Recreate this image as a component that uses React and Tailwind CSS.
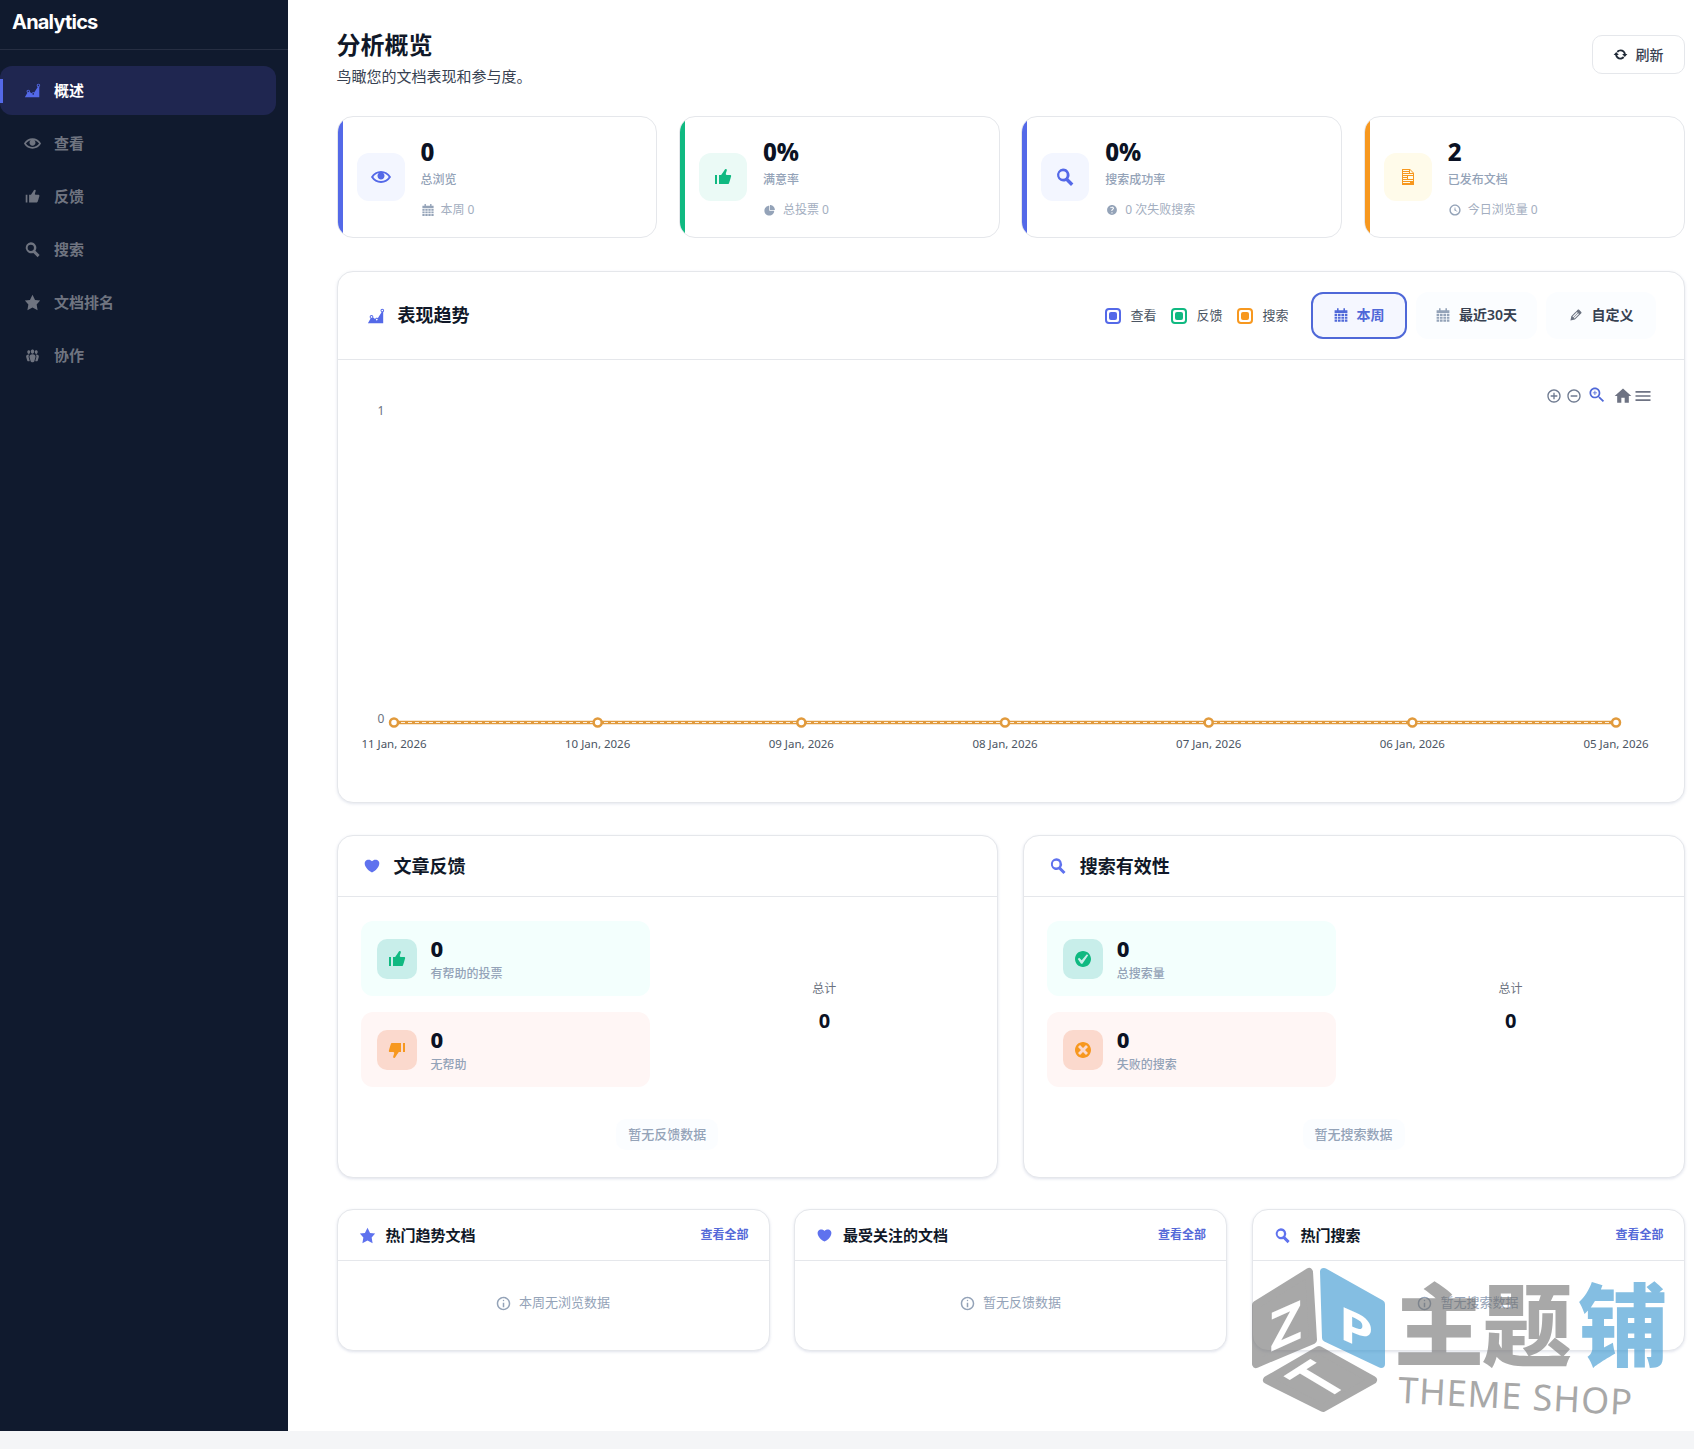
import React from 'react';

const paths = {
  chart: "M18 18l.01-12.28c.59-.35.99-.99.99-1.72 0-1.1-.9-2-2-2s-2 .9-2 2c0 .8.47 1.48 1.14 1.8l-4.13 6.58c-.33-.24-.73-.38-1.16-.38-.84 0-1.55.51-1.85 1.24l-2.14-1.53c.09-.22.14-.46.14-.71 0-1.11-.89-2-2-2-1.1 0-2 .89-2 2 0 .73.4 1.36.98 1.71L1 18h17zM17 3c.55 0 1 .45 1 1s-.45 1-1 1-1-.45-1-1 .45-1 1-1zM5 10c.55 0 1 .45 1 1s-.45 1-1 1-1-.45-1-1 .45-1 1-1zm5.85 3c.55 0 1 .45 1 1s-.45 1-1 1-1-.45-1-1 .45-1 1-1z",
  eye: "M19.7 9.4C17.7 6 14 3.9 10 3.9S2.3 6 .3 9.4L0 10l.3.6c2 3.4 5.7 5.5 9.7 5.5s7.7-2.1 9.7-5.5l.3-.6-.3-.6zM10 14.1c-3.1 0-6-1.6-7.7-4.1C3.6 8 5.7 6.6 8 6.1c-.9.6-1.5 1.7-1.5 2.9 0 1.9 1.6 3.5 3.5 3.5s3.5-1.6 3.5-3.5c0-1.2-.6-2.3-1.5-2.9 2.3.5 4.4 1.9 5.7 3.9-1.7 2.5-4.6 4.1-7.7 4.1z",
  up: "M12.72 2c.15-.02.26.02.41.07.56.19.83.79.66 1.35-.17.55-1 3.04-1 3.58 0 .53.75 1 1.35 1h3c.6 0 1 .4 1 1s-2 7-2 7c-.17.39-.55 1-1 1H6V8h2.14c.41-.41 3.3-4.71 3.58-5.27.21-.41.6-.68 1-.73zM2 8h2v9H2V8z",
  down: "M7.28 18c-.15.02-.26-.02-.41-.07-.56-.19-.83-.79-.66-1.35.17-.55 1-3.04 1-3.58 0-.53-.75-1-1.35-1h-3c-.6 0-1-.4-1-1s2-7 2-7c.17-.39.55-1 1-1H14v9h-2.14c-.41.41-3.3 4.71-3.58 5.27-.21.41-.6.68-1 .73zM18 12h-2V3h2v9z",
  search: "M8 1.500a6.500 6.500 0 0 1 5.400 10.100l5 5-2.400 2.400-5-5A6.500 6.500 0 1 1 8 1.500zm0 2.800a3.700 3.700 0 1 0 0 7.400 3.700 3.700 0 0 0 0-7.400z",
  star: "m10 1 3 6 6 .75-4.12 4.62L16 19l-6-3-6 3 1.13-6.63L1 7.75 7 7z",
  groups: "M8.03 4.46c-.29 1.28.55 3.46 1.97 3.46 1.41 0 2.25-2.18 1.96-3.46-.22-.98-1.08-1.63-1.96-1.63-.89 0-1.74.65-1.97 1.63zm-4.13.9c-.25 1.08.47 2.93 1.67 2.93s1.92-1.85 1.67-2.93c-.19-.83-.92-1.39-1.67-1.39s-1.48.56-1.67 1.39zm8.86 0c-.25 1.08.47 2.93 1.66 2.93 1.2 0 1.92-1.85 1.67-2.93-.19-.83-.92-1.39-1.67-1.39-.74 0-1.47.56-1.66 1.39zm-.59 11.43l1.25-4.3C14.2 10 12.71 8.47 10 8.47c-2.72 0-4.21 1.53-3.44 4.02l1.26 4.3C8.05 17.51 9 18 10 18c.98 0 1.94-.49 2.17-1.21zm-6.1-7.63c-.49.67-.96 1.83-.42 3.59l1.12 3.79c-.34.2-.77.31-1.2.31-.85 0-1.65-.41-1.85-1.03l-1.07-3.65c-.65-2.11.61-3.4 2.92-3.4.27 0 .54.02.79.06-.1.1-.2.22-.29.33zm8.35-.39c2.31 0 3.58 1.29 2.92 3.4l-1.07 3.65c-.2.62-1 1.03-1.85 1.03-.43 0-.86-.11-1.2-.31l1.11-3.77c.55-1.78.08-2.94-.42-3.61-.08-.11-.18-.23-.28-.33.25-.04.51-.06.79-.06z",
  heart: "M10 17.12c3.33-1.4 5.74-3.79 7.04-6.21 1.28-2.41 1.46-4.81.32-6.25-1.03-1.29-2.37-1.78-3.73-1.74s-2.68.63-3.63 1.74c-.95-1.11-2.27-1.7-3.63-1.74s-2.7.45-3.73 1.74c-1.14 1.44-.96 3.84.34 6.25 1.28 2.42 3.69 4.81 7.02 6.21z",
  calendar: "M5 1.500h2V4h6V1.500h2V4h3v3.500H2V4h3zM2 8.500h3.200v2.600H2zm4.200 0h3.300v2.600H6.200zm4.300 0h3.300v2.600h-3.300zm4.300 0H18v2.600h-3.200zM2 12.100h3.200v2.600H2zm4.200 0h3.300v2.600H6.200zm4.300 0h3.300v2.600h-3.300zm4.300 0H18v2.600h-3.200zM2 15.700h3.200v2.800H2zm4.200 0h3.300v2.800H6.200zm4.300 0h3.300v2.800h-3.300zm4.300 0H18v2.800h-3.200z",
  pie: "M10 10V3c3.870 0 7 3.130 7 7h-7zM9 4v7h7c0 3.870-3.130 7-7 7s-7-3.130-7-7 3.130-7 7-7z",
  help: "M17 10c0-3.870-3.140-7-7-7-3.870 0-7 3.130-7 7s3.130 7 7 7c3.860 0 7-3.130 7-7zm-6.300 1.290h-1.660v-.45c0-.38.08-.71.24-.99.16-.28.45-.59.87-.91.4-.29.66-.51.79-.69.14-.18.2-.38.2-.6 0-.25-.09-.44-.28-.58-.19-.13-.45-.19-.79-.19-.58 0-1.250.19-2 .57l-.69-1.390c.87-.49 1.800-.74 2.770-.74.81 0 1.450.2 1.920.58.48.39.71.91.71 1.550 0 .43-.09.8-.29 1.110-.19.32-.57.67-1.110 1.060-.38.28-.61.49-.71.63-.1.15-.15.34-.15.57v.47zm-.7 3.710c-.3 0-.53-.08-.69-.24-.17-.16-.25-.38-.25-.67 0-.29.08-.52.25-.68s.4-.24.69-.24.52.08.68.24.24.39.24.68c0 .28-.08.5-.24.67-.16.16-.39.24-.68.24z",
  clock: "M10 2c4.420 0 8 3.580 8 8s-3.580 8-8 8-8-3.580-8-8 3.580-8 8-8zm0 14c3.310 0 6-2.690 6-6s-2.690-6-6-6-6 2.690-6 6 2.690 6 6 6zm-.71-5.290c.07.05.14.1.23.15l-.02.02L14 13l-3.030-3.190L10 5l-.97 4.810h.01c0 .02-.01.05-.02.09S9 9.970 9 10c0 .28.1.52.29.71z",
  doc: "M12 2l4 4v12H4V2h8zM5 3v1h6V3H5zm7 3h3l-3-3v3zM5 5v1h6V5H5zm10 3V7H5v1h10zM5 9v1h4V9H5zm10 3V9h-5v3h5zM5 11v1h4v-1H5zm10 3v-1H5v1h10zm-3 2v-1H5v1h7z",
  edit: "M13.890 3.390l2.710 2.720c.46.46.42 1.240.03 1.640l-8.010 8.020-5.560 1.160 1.160-5.580s7.600-7.630 7.990-8.030c.39-.39 1.220-.39 1.680.07zm-2.730 2.790l-5.590 5.610 1.110 1.110 5.540-5.650zm-2.970 8.230l5.580-5.600-1.070-1.080-5.590 5.600z",
  update: "M10.200 3.280c3.530 0 6.430 2.610 6.920 6h2.080l-3.500 4-3.500-4h2.320c-.45-1.970-2.210-3.450-4.320-3.450-1.450 0-2.730.71-3.540 1.780L4.950 5.660C6.230 4.200 8.110 3.280 10.200 3.280zm-.4 13.440c-3.520 0-6.430-2.610-6.920-6H.8l3.500-4c1.170 1.330 2.330 2.670 3.500 4H5.480c.45 1.970 2.210 3.450 4.320 3.450 1.450 0 2.730-.71 3.540-1.780l1.710 1.950c-1.280 1.460-3.150 2.380-5.250 2.380z",
  yes: "M10 2c-4.420 0-8 3.580-8 8s3.580 8 8 8 8-3.580 8-8-3.580-8-8-8zm-.615 12.660h-1.340l-3.240-4.540 1.340-1.250 2.570 2.400 5.140-5.930 1.340.94-5.810 8.380z",
  dismiss: "M10 2c4.420 0 8 3.580 8 8s-3.580 8-8 8-8-3.580-8-8 3.580-8 8-8zm5 11l-3-3 3-3-2-2-3 3-3-3-2 2 3 3-3 3 2 2 3-3 3 3z",
  info: "M9 15h2V9H9v6zm1-10c-.5 0-1 .5-1 1s.5 1 1 1 1-.5 1-1-.5-1-1-1zm0-4c-5 0-9 4-9 9s4 9 9 9 9-4 9-9-4-9-9-9zm0 16c-3.900 0-7-3.100-7-7s3.100-7 7-7 7 3.100 7 7-3.100 7-7 7z",
};

const Icon = ({ name, className }) => (
  <svg viewBox="0 0 20 20" fill="currentColor" className={className}>
    <path d={paths[name]} />
  </svg>
);

const navItems = [
  { label: '概述', icon: 'chart', active: true },
  { label: '查看', icon: 'eye' },
  { label: '反馈', icon: 'up' },
  { label: '搜索', icon: 'search' },
  { label: '文档排名', icon: 'star' },
  { label: '协作', icon: 'groups' },
];

const stats = [
  { value: '0', label: '总浏览', meta: '本周 0', icon: 'eye', metaIcon: 'calendar', edge: 'bg-[#5469e8]', box: 'bg-[#f3f6ff]', tint: 'text-[#5469e8]' },
  { value: '0%', label: '满意率', meta: '总投票 0', icon: 'up', metaIcon: 'pie', edge: 'bg-[#10b981]', box: 'bg-[#ebfaf6]', tint: 'text-[#10b981]' },
  { value: '0%', label: '搜索成功率', meta: '0 次失败搜索', icon: 'search', metaIcon: 'help', edge: 'bg-[#5469e8]', box: 'bg-[#f3f6ff]', tint: 'text-[#5469e8]' },
  { value: '2', label: '已发布文档', meta: '今日浏览量 0', icon: 'doc', metaIcon: 'clock', edge: 'bg-[#f7981f]', box: 'bg-[#fffbea]', tint: 'text-[#f7981f]' },
];

const legend = [
  { label: '查看', border: 'border-[#5469e8]', fill: 'bg-[#5469e8]' },
  { label: '反馈', border: 'border-[#10b981]', fill: 'bg-[#10b981]' },
  { label: '搜索', border: 'border-[#f7981f]', fill: 'bg-[#f7981f]' },
];

const dates = ['11 Jan, 2026', '10 Jan, 2026', '09 Jan, 2026', '08 Jan, 2026', '07 Jan, 2026', '06 Jan, 2026', '05 Jan, 2026'];

const panels = [
  {
    title: '文章反馈', icon: 'heart', empty: '暂无反馈数据',
    rows: [
      { value: '0', label: '有帮助的投票', icon: 'up', row: 'bg-[#f3fffd]', box: 'bg-[#c8eeea]', tint: 'text-[#10b981]' },
      { value: '0', label: '无帮助', icon: 'down', row: 'bg-[#fff6f5]', box: 'bg-[#fbd9cd]', tint: 'text-[#f7981f]' },
    ],
  },
  {
    title: '搜索有效性', icon: 'search', empty: '暂无搜索数据',
    rows: [
      { value: '0', label: '总搜索量', icon: 'yes', row: 'bg-[#f3fffd]', box: 'bg-[#c8eeea]', tint: 'text-[#10b981]' },
      { value: '0', label: '失败的搜索', icon: 'dismiss', row: 'bg-[#fff6f5]', box: 'bg-[#fbd9cd]', tint: 'text-[#f7981f]' },
    ],
  },
];

const lists = [
  { title: '热门趋势文档', icon: 'star', empty: '本周无浏览数据' },
  { title: '最受关注的文档', icon: 'heart', empty: '暂无反馈数据' },
  { title: '热门搜索', icon: 'search', empty: '暂无搜索数据' },
];

const Chart = () => {
  const xs = dates.map((_, i) => 394 + i * 203.67);
  return (
    <svg viewBox="338 360 1346 442" className="block w-full h-[442px]">
      <text x="381" y="415" textAnchor="middle" fontSize="12" fill="#6b7280">1</text>
      <text x="381" y="723" textAnchor="middle" fontSize="12" fill="#6b7280">0</text>
      <line x1="394" y1="722.500" x2="1616" y2="722.500" stroke="#e19a3c" strokeWidth="3.500" />
      <line x1="394" y1="722.500" x2="1616" y2="722.500" stroke="#fbeedd" strokeWidth="1" strokeDasharray="4 3" />
      {xs.map((x, i) => (
        <g key={dates[i]}>
          <circle cx={x} cy="722.500" r="4" fill="#fff" stroke="#e19a3c" strokeWidth="2.500" />
          <text x={x} y="748" textAnchor="middle" fontSize="11.500" fill="#4b5563">{dates[i]}</text>
        </g>
      ))}
      <svg x="1546" y="388" width="16" height="16" viewBox="0 0 24 24" fill="#6e7a90">
        <path d="M13 7h-2v4H7v2h4v4h2v-4h4v-2h-4V7zm-1-5C6.480 2 2 6.480 2 12s4.480 10 10 10 10-4.480 10-10S17.520 2 12 2zm0 18c-4.410 0-8-3.590-8-8s3.590-8 8-8 8 3.590 8 8-3.590 8-8 8z" />
      </svg>
      <svg x="1566" y="388" width="16" height="16" viewBox="0 0 24 24" fill="#6e7a90">
        <path d="M7 11v2h10v-2H7zm5-9C6.480 2 2 6.480 2 12s4.480 10 10 10 10-4.480 10-10S17.520 2 12 2zm0 18c-4.410 0-8-3.590-8-8s3.590-8 8-8 8 3.590 8 8-3.590 8-8 8z" />
      </svg>
      <svg x="1587" y="385" width="20" height="20" viewBox="0 0 24 24" fill="#4f68d8">
        <path d="M15.500 14h-.79l-.28-.27C15.410 12.590 16 11.110 16 9.500 16 5.910 13.090 3 9.500 3S3 5.910 3 9.500 5.910 16 9.500 16c1.610 0 3.090-.59 4.230-1.570l.27.28v.79l5 4.990L20.490 19l-4.990-5zm-6 0C7.010 14 5 11.990 5 9.500S7.010 5 9.500 5 14 7.010 14 9.500 11.990 14 9.500 14z" />
        <path d="M12 10h-2v2H9v-2H7V9h2V7h1v2h2v1z" />
      </svg>
      <svg x="1613" y="386" width="20" height="20" viewBox="0 0 24 24" fill="#6e7383">
        <path d="M10 20v-6h4v6h5v-8h3L12 3 2 12h3v8z" />
      </svg>
      <svg x="1633" y="386" width="20" height="20" viewBox="0 0 24 24" fill="#6e7383">
        <path d="M3 18h18v-2H3v2zm0-5h18v-2H3v2zm0-7v2h18V6H3z" />
      </svg>
    </svg>
  );
};

const Watermark = () => (
  <div className="absolute left-[1251px] top-[1264px] w-[430px] h-[156px] opacity-60 pointer-events-none">
    <svg viewBox="0 0 140 152" className="absolute left-0 top-0 w-[140px] h-[152px]">
      <g strokeLinejoin="round" strokeWidth="8">
        <polygon points="5,41 58,8 62,76 5,100" fill="#6f6f6f" stroke="#6f6f6f" />
        <polygon points="73,8 130,40 130,100 75,74" fill="#3494cf" stroke="#3494cf" />
        <polygon points="68,86 122,116 72,144 16,116" fill="#6f6f6f" stroke="#6f6f6f" />
      </g>
      <text transform="translate(19 88) skewY(-24) scale(1.150 1.120)" fontSize="48" fontWeight="700" fill="#fff">Z</text>
      <text transform="translate(88 74) skewY(24) scale(1.200 1)" fontSize="46" fontWeight="700" fill="#fff">P</text>
      <text transform="matrix(1 -.645 1.150 .685 87 128)" fontSize="50" fontWeight="600" textAnchor="middle" fill="#fff">T</text>
    </svg>
    <div className="absolute left-[143px] top-[6px] flex items-center whitespace-nowrap text-[90px] leading-[108px] font-black tracking-[-2px]">
      <span className="text-[#6f6f6f]">主题</span>
      <span className="ml-[8px] text-[#3494cf]">铺</span>
    </div>
    <div className="absolute left-[147px] top-[111px] text-[36px] leading-[42px] font-normal tracking-[1px] text-[#6f6f6f] rotate-[3deg] whitespace-nowrap">THEME SHOP</div>
  </div>
);

export default function App() {
  return (
    <div className="relative min-h-[1449px] bg-[#f4f5f7] font-['Noto_Sans','Noto_Sans_CJK_SC',sans-serif]">
      <div className="flex h-[1431px] bg-white">
        {/* Sidebar */}
        <aside className="w-[288px] shrink-0 bg-[#101a2e]">
          <div className="h-[50px] pl-[12px] pt-[8px] border-b border-[#262e42] font-['Inter',sans-serif] text-[20px] leading-[28px] font-bold tracking-[-0.8px] text-white">Analytics</div>
          <nav className="flex flex-col gap-[4px] pt-[16px] pr-[12px]">
            {navItems.map((item) => (
              <div
                key={item.label}
                className={`relative flex items-center h-[49px] pl-[24px] gap-[13px] rounded-[12px] text-[15px] font-semibold ${
                  item.active ? 'bg-[#1f2650] text-white' : 'text-[#6f7480]'
                }`}
              >
                {item.active && <span className="absolute left-0 top-[13px] w-[3px] h-[24px] bg-[#5469e8]" />}
                <Icon name={item.icon} className={`w-[17px] h-[17px] ${item.active ? 'text-[#5469e8]' : ''}`} />
                <span>{item.label}</span>
              </div>
            ))}
          </nav>
        </aside>

        {/* Main */}
        <main className="flex-1 min-w-0 pl-[48.500px] pr-[9.500px] pt-[29px]">
          <div className="flex items-start justify-between">
            <div>
              <h1 className="text-[24px] leading-[32px] font-bold text-[#101828]">分析概览</h1>
              <p className="mt-[5px] text-[15px] leading-[20px] text-[#374151]">鸟瞰您的文档表现和参与度。</p>
            </div>
            <button className="mt-[6px] flex items-center justify-center gap-[8px] w-[93px] h-[39px] rounded-[10px] border border-[#e5e7eb] bg-white text-[14px] font-medium text-[#374151]">
              <Icon name="update" className="w-[15px] h-[15px] text-[#1f2937]" />
              刷新
            </button>
          </div>

          <div className="mt-[30px] grid grid-cols-4 gap-[21.500px]">
            {stats.map((s) => (
              <div key={s.label} className="relative overflow-hidden flex items-center h-[122px] pl-[19px] rounded-[16px] border border-[#e5e7eb] bg-white">
                <span className={`absolute left-0 top-0 bottom-0 w-[5px] ${s.edge}`} />
                <div className={`flex items-center justify-center w-[48px] h-[48px] rounded-[12px] ${s.box}`}>
                  <Icon name={s.icon} className={`w-[20px] h-[20px] ${s.tint}`} />
                </div>
                <div className="ml-[16px]">
                  <div className="text-[24px] leading-[30px] font-extrabold text-[#0b1224]">{s.value}</div>
                  <div className="mt-[5px] text-[12px] leading-[16px] font-medium text-[#94a3b8]">{s.label}</div>
                  <div className="mt-[14px] flex items-center gap-[6px] text-[12px] leading-[16px] text-[#a3aec0]">
                    <Icon name={s.metaIcon} className="w-[14px] h-[14px] text-[#94a3b8]" />
                    {s.meta}
                  </div>
                </div>
              </div>
            ))}
          </div>

          {/* Trend chart */}
          <section className="mt-[33px] rounded-[16px] border border-[#e5e7eb] bg-white shadow-[0_1px_3px_rgba(100,116,160,0.18)]">
            <div className="flex items-center h-[88px] pl-[29px] pr-[28px] border-b border-[#e5e7eb]">
              <Icon name="chart" className="w-[18px] h-[18px] text-[#5469e8]" />
              <h2 className="ml-[13px] text-[18px] font-bold text-[#101828]">表现趋势</h2>
              <div className="ml-auto flex items-center gap-[15px]">
                {legend.map((l) => (
                  <div key={l.label} className="flex items-center gap-[9px] text-[13px] text-[#4b5563]">
                    <span className={`w-[16px] h-[16px] p-[2px] rounded-[4px] border-2 bg-white ${l.border}`}>
                      <span className={`block w-full h-full rounded-[2px] ${l.fill}`} />
                    </span>
                    {l.label}
                  </div>
                ))}
              </div>
              <div className="ml-[22px] flex items-center gap-[9px] text-[14px]">
                <button className="flex items-center justify-center gap-[8px] w-[96px] h-[47px] pb-[2px] rounded-[12px] border-2 border-[#4f68d8] bg-[#f5f7ff] font-semibold text-[#4f68d8]">
                  <Icon name="calendar" className="w-[16px] h-[16px]" />
                  本周
                </button>
                <button className="flex items-center justify-center gap-[8px] w-[121px] h-[47px] pb-[2px] rounded-[12px] bg-[#fbfdff] font-semibold text-[#374151]">
                  <Icon name="calendar" className="w-[16px] h-[16px] text-[#94a3b8]" />
                  最近30天
                </button>
                <button className="flex items-center justify-center gap-[8px] w-[110px] h-[47px] pb-[2px] rounded-[12px] bg-[#fbfdff] font-semibold text-[#374151]">
                  <Icon name="edit" className="w-[16px] h-[16px] text-[#6b7280]" />
                  自定义
                </button>
              </div>
            </div>
            <Chart />
          </section>

          {/* Feedback and search */}
          <div className="mt-[32px] grid grid-cols-2 gap-[24.500px]">
            {panels.map((p) => (
              <section key={p.title} className="h-[343px] rounded-[16px] border border-[#e5e7eb] bg-white shadow-[0_1px_3px_rgba(100,116,160,0.2)]">
                <div className="flex items-center h-[61px] pl-[25px] border-b border-[#e5e7eb]">
                  <Icon name={p.icon} className="w-[18px] h-[18px] text-[#5f72ee]" />
                  <h2 className="ml-[13px] text-[18px] font-bold text-[#101828]">{p.title}</h2>
                </div>
                <div className="grid grid-cols-[289px_1fr] gap-[26px] pt-[24px] pl-[23px] pr-[24px]">
                  <div className="flex flex-col gap-[16px]">
                    {p.rows.map((r) => (
                      <div key={r.label} className={`flex items-center h-[75px] pl-[16px] rounded-[12px] ${r.row}`}>
                        <div className={`flex items-center justify-center w-[40px] h-[40px] rounded-[10px] ${r.box}`}>
                          <Icon name={r.icon} className={`w-[20px] h-[20px] ${r.tint}`} />
                        </div>
                        <div className="ml-[14px] -mt-[2px]">
                          <div className="text-[22px] leading-[28px] font-extrabold text-[#0b1224]">{r.value}</div>
                          <div className="mt-[4px] text-[12px] leading-[16px] font-medium text-[#94a3b8]">{r.label}</div>
                        </div>
                      </div>
                    ))}
                  </div>
                  <div className="flex flex-col items-center pt-[60px]">
                    <div className="text-[12px] leading-[16px] text-[#6b7280]">总计</div>
                    <div className="mt-[10px] text-[20px] leading-[28px] font-bold text-[#0b1224]">0</div>
                  </div>
                </div>
                <div className="mt-[32px] flex justify-center">
                  <span className="px-[12px] py-[6px] rounded-[10px] bg-[#fbfdff] text-[13px] leading-[19px] font-medium text-[#94a3b8]">{p.empty}</span>
                </div>
              </section>
            ))}
          </div>

          {/* Top lists */}
          <div className="mt-[31px] grid grid-cols-3 gap-[24.500px]">
            {lists.map((l) => (
              <section key={l.title} className="h-[142px] rounded-[16px] border border-[#e5e7eb] bg-white shadow-[0_1px_3px_rgba(100,116,160,0.2)]">
                <div className="flex items-center h-[51px] pl-[21px] pr-[20px] border-b border-[#e5e7eb]">
                  <Icon name={l.icon} className="w-[17px] h-[17px] text-[#5f72ee]" />
                  <h3 className="ml-[10px] text-[15px] font-bold text-[#101828]">{l.title}</h3>
                  <a className="ml-auto text-[12px] font-semibold text-[#5469d8]">查看全部</a>
                </div>
                <div className="flex items-center justify-center gap-[8px] h-[84px] text-[13px] text-[#94a3b8]">
                  <Icon name="info" className="w-[15px] h-[15px]" />
                  {l.empty}
                </div>
              </section>
            ))}
          </div>
        </main>
      </div>
      <Watermark />
    </div>
  );
}
